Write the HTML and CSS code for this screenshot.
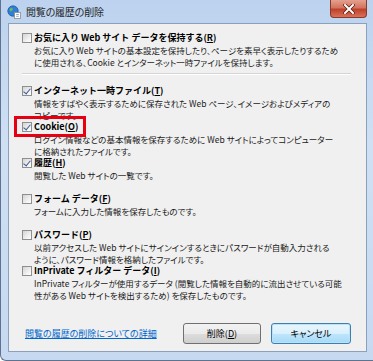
FILE: index.html
```html
<!DOCTYPE html>
<html>
  <head>
    <title>閲覧の履歴の削除</title>
    <link rel="stylesheet" href="styles.css">
  </head>
  <body>
    <div class="window">
      <div class="titlebar">
        <svg class="app-icon" width="14" height="14" viewBox="0 0 14 14">
          <circle cx="6" cy="6" r="5.2" fill="#2f7fd6" stroke="#1d5aa8" stroke-width="0.8" />
          <path d="M3 3.5 Q5 2.5 6 4 Q5 6 3.5 6.5 Q2.2 5 3 3.5 Z" fill="#6cc04a" />
          <path d="M7 7 Q9 6.5 10 8 Q9 9.8 7.5 9.5 Z" fill="#6cc04a" />
          <rect x="7.5" y="7.5" width="6" height="6" fill="#fff" stroke="#8a8a8a" stroke-width="0.8" />
          <line x1="9" y1="9.5" x2="12" y2="9.5" stroke="#7aa0cc" stroke-width="0.8" />
          <line x1="9" y1="11.3" x2="12" y2="11.3" stroke="#7aa0cc" stroke-width="0.8" />
        </svg>
        <span class="title">閲覧の履歴の削除</span>
        <div class="close-btn">
          <svg width="12" height="10" viewBox="0 0 12 10">
            <path d="M2 1 L10 9 M10 1 L2 9" stroke="#5a1a10" stroke-width="3.4" stroke-linecap="square" />
            <path d="M2 1 L10 9 M10 1 L2 9" stroke="#fff" stroke-width="2" stroke-linecap="square" />
          </svg>
        </div>
      </div>

      <div class="client">
        <div class="item first">
          <div class="label"><span class="box"></span><b>お気に入り Web サイト データを保持する(<u>R</u>)</b></div>
          <p class="desc">お気に入り Web サイトの基本設定を保持したり、ページを素早く表示したりするため<br>に使用される、Cookie とインターネット一時ファイルを保持します。</p>
        </div>
        <div class="sep"></div>

        <div class="item">
          <div class="label"><span class="box checked"></span><b>インターネット一時ファイル(<u>T</u>)</b></div>
          <p class="desc">情報をすばやく表示するために保存された Web ページ、イメージおよびメディアの<br>コピーです。</p>
        </div>
        <div class="item">
          <div class="highlight"></div>
          <div class="label"><span class="box checked"></span><b>Cookie(<u>O</u>)</b></div>
          <p class="desc">ログイン情報などの基本情報を保存するために Web サイトによってコンピューター<br>に格納されたファイルです。</p>
        </div>
        <div class="item">
          <div class="label"><span class="box checked"></span><b>履歴(<u>H</u>)</b></div>
          <p class="desc">閲覧した Web サイトの一覧です。</p>
        </div>
        <div class="item">
          <div class="label"><span class="box"></span><b>フォーム データ(<u>F</u>)</b></div>
          <p class="desc">フォームに入力した情報を保存したものです。</p>
        </div>
        <div class="item">
          <div class="label"><span class="box"></span><b>パスワード(<u>P</u>)</b></div>
          <p class="desc">以前アクセスした Web サイトにサインインするときにパスワードが自動入力される<br>ように、パスワード情報を格納したファイルです。</p>
        </div>
        <div class="item">
          <div class="label"><span class="box"></span><b>InPrivate フィルター データ(<u>I</u>)</b></div>
          <p class="desc">InPrivate フィルターが使用するデータ (閲覧した情報を自動的に流出させている可能<br>性がある Web サイトを検出するため) を保存したものです。</p>
        </div>

        <div class="footer">
          <a class="help-link" href="#">閲覧の履歴の削除についての詳細</a>
          <div class="buttons">
            <button type="button" class="btn">削除(<u>D</u>)</button>
            <button type="button" class="btn default">キャンセル</button>
          </div>
        </div>
      </div>
    </div>
  </body>
</html>
```

FILE: styles.css
```css
body {
  margin: 0;
  font-family: "Noto Sans CJK JP", "Noto Sans", sans-serif;
  font-size: 9px;
  font-feature-settings: "palt";
  color: #000;
}
.window {
  width: 373px;
  height: 361px;
  box-sizing: border-box;
  background: linear-gradient(to bottom, #bcd2ee, #cfe0f4 40%, #c6d9f1);
  border-left: 1px solid #5f7391;
  border-bottom: 1px solid #5f7391;
  border-bottom-left-radius: 6px;
  padding: 0 6px 0 7px;
}
.titlebar {
  height: 23px;
  display: flex;
  align-items: center;
}
.app-icon {
  margin-left: -1px;
  margin-right: 5px;
}
.title {
  font-size: 10px;
  font-feature-settings: normal;
  color: #1e1e1e;
  letter-spacing: -0.3px;
}
.close-btn {
  align-self: flex-start;
  margin-left: auto;
  width: 37px;
  height: 18px;
  box-sizing: border-box;
  border: 1px solid #8a3a2c;
  border-top: none;
  border-radius: 0 0 4px 4px;
  background: linear-gradient(to bottom, #e4a08e, #d27560 45%, #c0412a 55%, #d9735b);
  display: flex;
  align-items: center;
  justify-content: center;
}
.client {
  height: 329px;
  box-sizing: border-box;
  background: #f0f0f0;
  border: 1px solid #8aa0bd;
  padding: 8px 15px 7px 13px;
  display: flex;
  flex-direction: column;
}
.item {
  position: relative;
  height: 36px;
  line-height: 12px;
}
.label {
  display: flex;
  align-items: center;
  height: 12px;
  white-space: nowrap;
}
.label b {
  font-weight: bold;
  font-feature-settings: normal;
  font-size: 9px;
}
.box {
  width: 10px;
  height: 10px;
  box-sizing: border-box;
  border: 1px solid #8e8f8f;
  background: linear-gradient(135deg, #d4d4d4, #f4f4f4 70%, #fff);
  margin-right: 2px;
  position: relative;
}
.box.checked::after {
  content: "";
  position: absolute;
  left: 2px;
  top: 0px;
  width: 3px;
  height: 6px;
  border-right: 1.5px solid #3d5a98;
  border-bottom: 1.5px solid #3d5a98;
  transform: rotate(40deg);
}
.desc {
  margin: 0;
  padding-left: 12px;
  font-size: 8.5px;
  white-space: nowrap;
  color: #1a1a1a;
}
.sep {
  height: 1px;
  background: #d5d5d5;
  border-bottom: 1px solid #fff;
  margin: 5px 0 10px 0;
}
.highlight {
  position: absolute;
  left: -8px;
  top: -5px;
  width: 72px;
  height: 21px;
  box-sizing: border-box;
  border: 3px solid #e60012;
}
.footer {
  margin-top: auto;
  display: flex;
  align-items: center;
  padding-left: 3px;
}
.help-link {
  color: #0066cc;
  text-decoration: underline;
}
.buttons {
  margin-left: auto;
  display: flex;
  gap: 10px;
}
.btn {
  width: 78px;
  height: 21px;
  font-family: inherit;
  font-size: 9px;
  font-feature-settings: "palt";
  border: 1px solid #707070;
  border-radius: 3px;
  background: linear-gradient(to bottom, #f2f2f2, #ebebeb 50%, #dddddd 51%, #cfcfcf);
  padding: 0;
  color: #000;
}
.btn.default {
  width: 80px;
  border-color: #3c7fb1;
  background: linear-gradient(to bottom, #eaf6fd, #d9f0fc 50%, #bee6fd 51%, #a7d9f5);
  box-shadow: inset 0 0 0 1px #b9e3fa;
}
```
